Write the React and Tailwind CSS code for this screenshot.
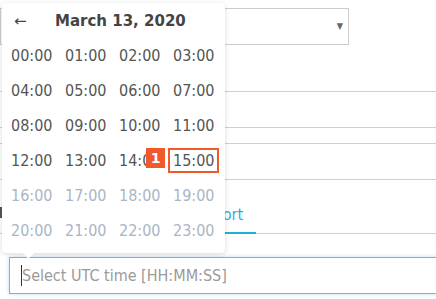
import React from 'react';

const hours = Array.from({ length: 24 }, (_, i) => String(i).padStart(2, '0') + ':00');

function TimeCell({ label, disabled, selected }) {
    return (
        <div className="w-[54px] flex items-center">
            <span
                className={
                    'relative px-[3px] py-[1px] border-2 leading-[19px] ' +
                    (selected ? 'border-[#f0592a] ' : 'border-transparent ') +
                    (disabled ? 'text-[#a9b6c4]' : 'text-[#555555]')
                }
            >
                {label}
                {selected && (
                    <span className="absolute left-[-24px] top-[-2px] w-[19px] h-[20px] bg-[#f0592a] text-white text-[14px] font-bold flex items-center justify-center leading-none font-['DejaVu_Sans',sans-serif]">
                        1
                    </span>
                )}
            </span>
        </div>
    );
}

export default function App() {
    const rows = [0, 1, 2, 3, 4, 5].map((r) => hours.slice(r * 4, r * 4 + 4));

    return (
        <div className="relative w-[436px] h-[299px] overflow-hidden bg-white font-['DejaVu_Sans_Condensed','DejaVu_Sans',sans-serif]">
            {/* page behind the picker */}
            <div className="pt-[8px]">
                <div className="w-[349px] h-[37px] border border-[#cccccc] flex items-center justify-end pr-[5px]">
                    <span className="text-[9px] text-[#666]">▼</span>
                </div>
                <div className="h-[46px]" />
                <div className="h-[36px] border-t border-[#cfcfcf]" />
                <div className="h-[16px] border-t border-[#cfcfcf]" />
                <div className="h-[36px] border-t border-[#cfcfcf]" />
                <div className="border-t border-[#cfcfcf] h-[20px] relative">
                    <div className="absolute left-0 top-[27px] w-[2px] h-[11px] bg-[#555]" />
                </div>
                <div className="h-[35px] flex items-end border-b border-[#cfcfcf]">
                    <div className="ml-[192px] h-[35px] pl-[4px] pr-[13px] border-b-2 border-[#1eb1d8] -mb-px text-[#1eb1d8] text-[16px] flex items-start pt-[4px]">
                        Export
                    </div>
                </div>
                <div className="h-[23px]" />
                <div className="ml-[9px] w-[440px] h-[37px] border border-[#6cb6f0] shadow-[0_0_4px_rgba(108,182,240,0.45)] flex items-center pl-[11px] text-[16px] text-[#9a9a9a]">
                    <span className="w-px h-[21px] bg-[#333]" />
                    Select UTC time [HH:MM:SS]
                </div>
            </div>

            {/* time picker popup */}
            <div className="absolute left-[2px] top-[3px] w-[223px] h-[250px] bg-white rounded-[4px] shadow-[0_1px_5px_rgba(0,0,0,0.15)]">
                <div className="h-[35px] flex items-center pt-[1px] pl-[12px] text-[#444] font-['DejaVu_Sans',sans-serif]">
                    <span className="text-[15px] w-[41px]">←</span>
                    <span className="text-[15px] font-bold">March 13, 2020</span>
                </div>
                <div className="pl-[4px] text-[16px]">
                    {rows.map((row, r) => (
                        <div key={r} className="h-[35px] flex">
                            {row.map((h, c) => (
                                <TimeCell
                                    key={h}
                                    label={h}
                                    disabled={r >= 4}
                                    selected={r === 3 && c === 3}
                                />
                            ))}
                        </div>
                    ))}
                </div>
                <div className="absolute left-[22px] bottom-[-4px] w-[9px] h-[9px] bg-white rotate-45" />
            </div>
        </div>
    );
}
